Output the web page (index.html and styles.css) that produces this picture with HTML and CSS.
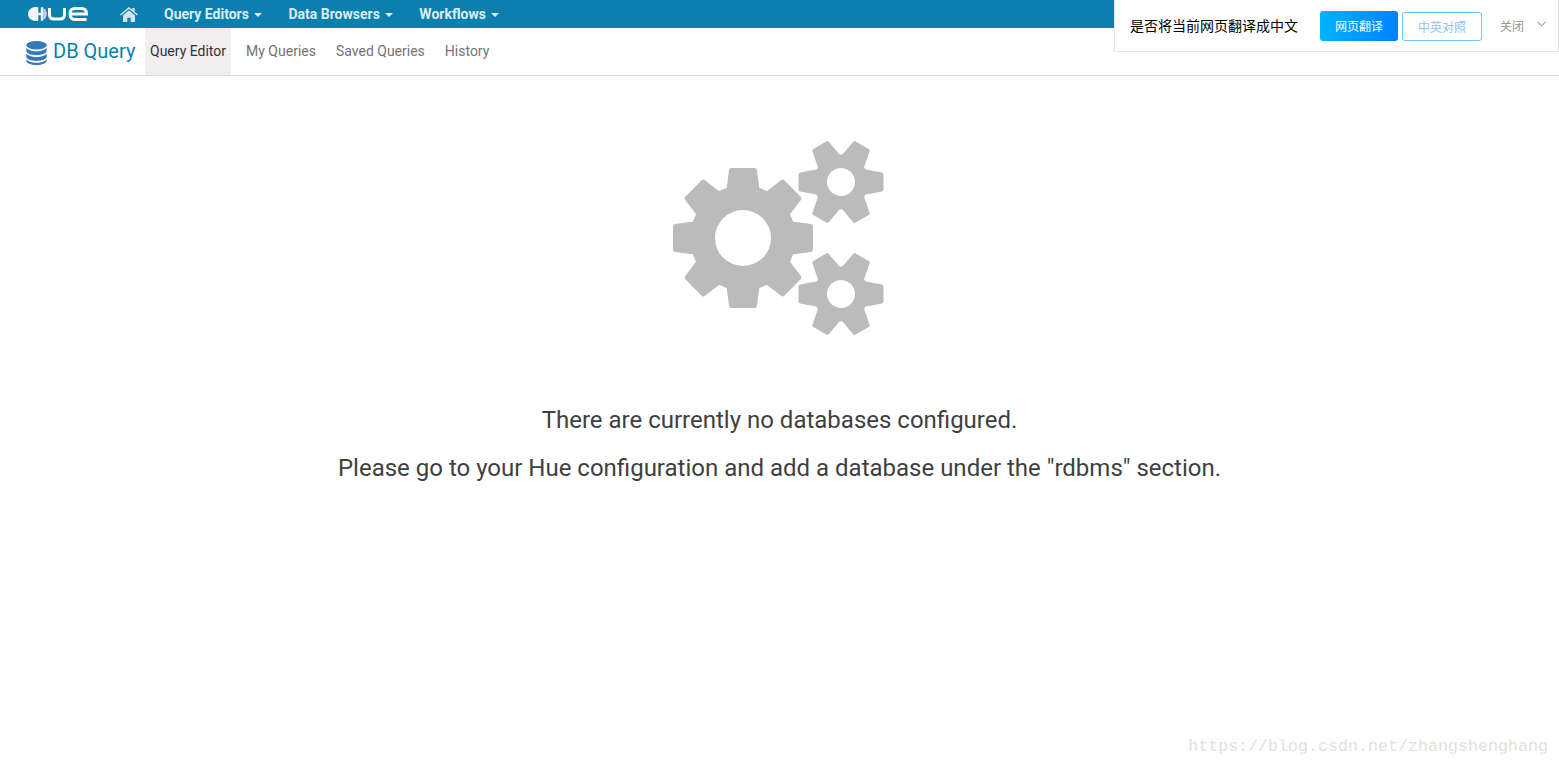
FILE: index.html
```html
<!DOCTYPE html>
<html lang="en">
<head>
<meta charset="utf-8">
<title>DB Query</title>
<link rel="stylesheet" href="styles.css">
</head>
<body>
<header class="topbar">
  <a class="logo" href="#" aria-label="Hue">
    <svg width="62" height="16" viewBox="0 0 62 16">
      <path d="M11.300 1.200A8 7 0 0 0 1 8a8 7 0 0 0 10.300 6.800V9.200h2.500v5.600h2.500V1.200h-2.500v5.600h-2.500z" fill="#f2f6f8"/>
      <path d="M16.300 2C19 3.500 19.800 6 19.800 8s-.8 4.500-3.500 6z" fill="#d9c3ec"/>
      <path d="M22.500 2v6.500c0 3.300 2 4.500 4.500 4.500h6c2.500 0 4.500-1.200 4.500-4.500V2" fill="none" stroke="#fff" stroke-width="3"/>
      <path d="M44 8h15.500c0-3.500-2-5.500-5-5.500H48c-3 0-5 2-5 5.500s2 5.500 5 5.500h11.500" fill="none" stroke="#fff" stroke-width="3"/>
    </svg>
  </a>
  <a class="home" href="#" aria-label="Home">
    <svg width="18" height="15" viewBox="0 0 18 15">
      <path d="M9 0l3.200 2.700V1h2.500v3.800L18 7.600l-.9 1L9 2 .9 8.600 0 7.600z" fill="#cfe6f1"/>
      <path d="M9 3.400l6 4.900V15h-4.300v-4.200H7.300V15H3V8.300z" fill="#cfe6f1"/>
    </svg>
  </a>
  <nav class="mainnav">
    <a href="#">Query Editors<i class="caret"></i></a>
    <a href="#">Data Browsers<i class="caret"></i></a>
    <a href="#">Workflows<i class="caret"></i></a>
  </nav>
</header>

<div class="subbar">
  <a class="brand" href="#">
    <svg width="21" height="24" viewBox="0 0 21 24">
      <ellipse cx="10.500" cy="4.200" rx="10.200" ry="4.200" fill="#337ab7"/>
      <path d="M.3 6.500c1.500 2.600 5.600 3.700 10.200 3.700s8.700-1.100 10.200-3.700V10c0 2.300-4.600 4.200-10.200 4.200S.3 12.300.3 10z" fill="#337ab7"/>
      <path d="M.3 12.300c1.500 2.600 5.600 3.700 10.200 3.700s8.700-1.100 10.200-3.700v3.500c0 2.300-4.600 4.200-10.200 4.200S.3 18.100.3 15.800z" fill="#337ab7"/>
      <path d="M.3 18c1.500 2.600 5.600 3.700 10.200 3.700S19.200 20.600 20.700 18v2c0 2.300-4.600 4-10.200 4S.3 22.300.3 20z" fill="#337ab7"/>
    </svg>
    <span class="brand-name">DB Query</span>
  </a>
  <nav class="subnav">
    <a class="active" href="#">Query Editor</a>
    <a href="#">My Queries</a>
    <a href="#">Saved Queries</a>
    <a href="#">History</a>
  </nav>
</div>

<main class="empty">
  <svg class="gears" width="212" height="196" viewBox="0 0 212 196">
    <defs>
      <path id="big-tooth" d="M-11.500 -67.500H11.500L14.500 -45H-14.500Z"/>
      <path id="small-tooth" d="M-7.500 -40.500H7.500L11 -22H-11Z"/>
      <g id="small-gear">
        <circle r="25.500"/>
        <use href="#small-tooth"/>
        <use href="#small-tooth" transform="rotate(60)"/>
        <use href="#small-tooth" transform="rotate(120)"/>
        <use href="#small-tooth" transform="rotate(180)"/>
        <use href="#small-tooth" transform="rotate(240)"/>
        <use href="#small-tooth" transform="rotate(300)"/>
        <circle r="14" class="hole"/>
      </g>
    </defs>
    <g class="gear-body" transform="translate(71 97)">
      <circle r="50"/>
      <use href="#big-tooth"/>
      <use href="#big-tooth" transform="rotate(45)"/>
      <use href="#big-tooth" transform="rotate(90)"/>
      <use href="#big-tooth" transform="rotate(135)"/>
      <use href="#big-tooth" transform="rotate(180)"/>
      <use href="#big-tooth" transform="rotate(225)"/>
      <use href="#big-tooth" transform="rotate(270)"/>
      <use href="#big-tooth" transform="rotate(315)"/>
      <circle r="28" class="hole"/>
    </g>
    <use class="gear-body gear-small" href="#small-gear" transform="translate(169 41) rotate(30)"/>
    <use class="gear-body gear-small" href="#small-gear" transform="translate(169 153) rotate(30)"/>
  </svg>
  <h1>There are currently no databases configured.</h1>
  <h1>Please go to your Hue configuration and add a database under the "rdbms" section.</h1>
</main>

<aside class="translate">
  <span class="prompt">是否将当前网页翻译成中文</span>
  <button class="btn btn-primary" type="button">网页翻译</button>
  <button class="btn btn-outline" type="button">中英对照</button>
  <span class="close">关闭</span>
  <svg class="chevron" width="9" height="6" viewBox="0 0 9 6"><path d="M.5.8L4.500 4.800 8.500.8" fill="none" stroke="#a0a0a0" stroke-width="1.100"/></svg>
</aside>

<div class="watermark">https://blog.csdn.net/zhangshenghang</div>
</body>
</html>
```

FILE: styles.css
```css
* { box-sizing: border-box; }

html, body { height: 100%; }

body {
  margin: 0;
  background: #fff;
  color: #333;
  font-family: Roboto, "Liberation Sans", sans-serif;
  overflow: hidden;
}

a { text-decoration: none; color: inherit; }

.topbar {
  display: flex;
  align-items: center;
  height: 28px;
  padding-left: 27px;
  background: #0b7fad;
}

.logo { display: flex; width: 93px; }

.home { display: flex; width: 44px; }

.mainnav { display: flex; gap: 26.500px; }

.mainnav a {
  display: flex;
  align-items: center;
  color: #dcedf5;
  font-size: 14px;
  font-weight: 700;
  line-height: 28px;
}

.caret {
  margin-left: 5px;
  margin-top: 2px;
  border-top: 4px solid #dcedf5;
  border-left: 4px solid transparent;
  border-right: 4px solid transparent;
}

.subbar {
  display: flex;
  height: 48px;
  padding-left: 26px;
  border-bottom: 1px solid #dcdcdc;
}

.brand {
  display: flex;
  align-items: center;
  gap: 6px;
  width: 119px;
  color: #0b7fad;
  font-size: 20px;
}

.brand svg { margin-top: 3px; }

.brand-name { margin-top: -1px; }

.subnav { display: flex; }

.subnav a {
  padding: 0 5px;
  margin-right: 10px;
  color: #747474;
  font-size: 14px;
  line-height: 47px;
}

.subnav a.active {
  background: #f0eeee;
  color: #333;
}

.empty {
  display: flex;
  flex-direction: column;
  align-items: center;
  padding-top: 65px;
}

.gears { margin-left: -4px; margin-bottom: 59px; }

.gear-body { fill: #bbb; stroke: #bbb; stroke-width: 5; stroke-linejoin: round; }

.gear-small { stroke-width: 4; }

.gear-body .hole, .hole { fill: #fff; stroke: none; }

.empty h1 {
  margin: 0;
  color: #3f3f3f;
  font-size: 24px;
  font-weight: 400;
  line-height: 48px;
}

.translate {
  position: absolute;
  top: 0;
  left: 1114px;
  right: 0;
  height: 52px;
  display: flex;
  align-items: center;
  padding-left: 15px;
  background: #fff;
  border: 1px solid #e4e4e4;
  border-top: 0;
  font-family: "Noto Sans CJK SC", sans-serif;
}

.prompt { width: 190px; margin-top: -2px; color: #000; font-size: 14px; }

.btn {
  display: block;
  height: 30px;
  padding: 0;
  font-family: inherit;
  font-size: 12px;
  border-radius: 3px;
}

.btn-primary {
  width: 78px;
  margin-right: 4px;
  border: 0;
  color: #fff;
  background: linear-gradient(90deg, #00b4ff, #0080ff);
}

.btn-outline {
  width: 80px;
  height: 29px;
  margin-top: 1px;
  margin-right: 18px;
  border: 1px solid #6cc5fb;
  color: #8fc4f2;
  background: #fff;
}

.close { width: 37px; color: #9a948c; font-size: 12px; }

.chevron { margin-top: -3px; }

.watermark {
  position: absolute;
  right: 11px;
  bottom: 9px;
  color: #e3e1dc;
  font-family: "Liberation Mono", monospace;
  font-size: 16.670px;
  line-height: 20px;
}
```
